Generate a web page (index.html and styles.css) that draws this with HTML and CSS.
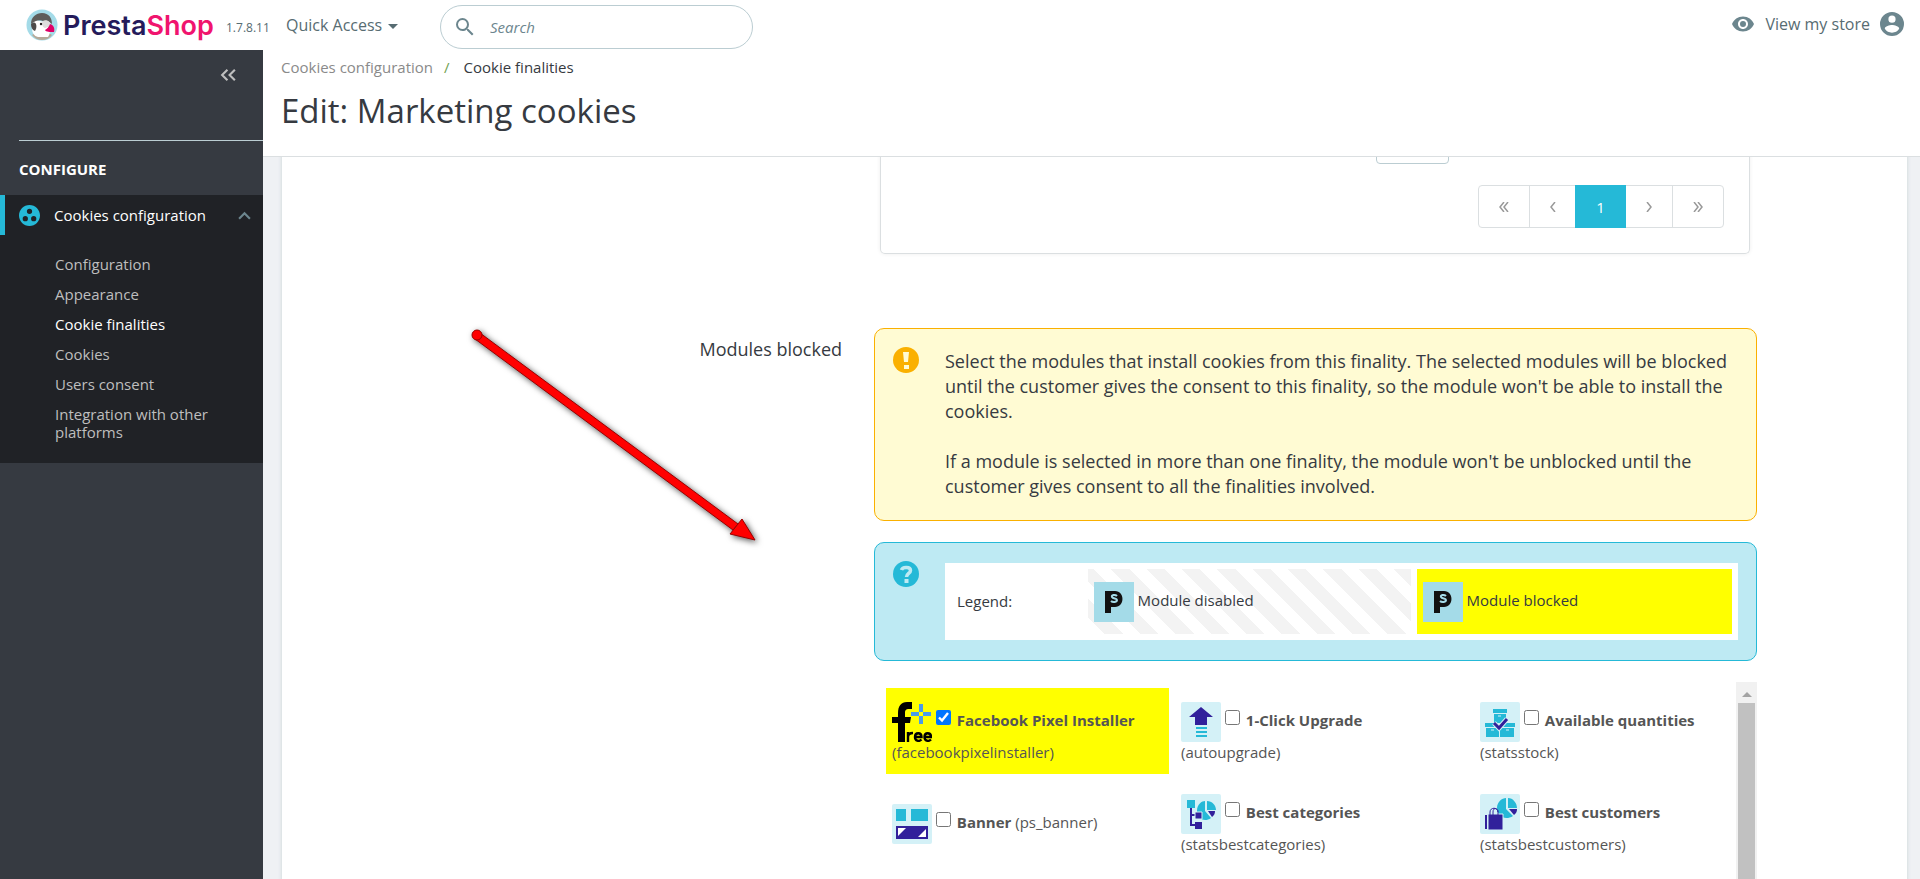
FILE: index.html
```html
<!DOCTYPE html>
<html lang="en">
<head>
    <meta charset="UTF-8">
    <meta name="viewport" content="width=device-width, initial-scale=1.0">
    <title>Edit: Marketing cookies</title>
    <link rel="stylesheet" href="styles.css">
</head>
<body>
    <header class="header">
        <a class="logo" href="#">
            <svg class="logo-icon" viewBox="0 0 32 32" aria-hidden="true">
                <circle cx="16" cy="16" r="15.500" fill="#a4dbe8"/>
                <path d="M6 26c3-3 17-3 20 0-2 3-6 5-10 5s-8-2-10-5z" fill="#b5a999"/>
                <path d="M6 19c0 5 2 8 6 9h10c2-3 3-8 1-14L9 11c-2 2-3 5-3 8z" fill="#fff"/>
                <path d="M5 15C5 8 10 4 16 4c7 0 10 5 10 11-3-3-6-4-9-3-4-2-8 0-12 3z" fill="#5f5d5b"/>
                <path d="M5 15c2-2 4-2 5 0 1 3 0 5-1 7-3-1-4-4-4-7z" fill="#4d4b4a"/>
                <path d="M17 12c4-2 8 1 8 5l-6 2c-3-1-4-5-2-7z" fill="#ddd"/>
                <circle cx="15" cy="15" r="1.200" fill="#222"/>
                <path d="M24 15c4 1 5 5 4 8-4 0-8 0-9-2 2-1 4-3 5-6z" fill="#df0067"/>
            </svg>
            <span class="logo-text">Presta<span class="logo-shop">Shop</span></span>
        </a>
        <span class="version">1.7.8.11</span>
        <button class="quick-access" type="button">Quick Access <span class="caret"></span></button>
        <form class="search">
            <svg class="search-icon" viewBox="3 3 18 18" aria-hidden="true"><path d="M15.5 14h-.79l-.28-.27A6.47 6.47 0 0 0 16 9.500 6.500 6.500 0 1 0 9.500 16c1.610 0 3.090-.59 4.230-1.570l.27.28v.79l5 4.990L20.490 19l-4.990-5zm-6 0C7.010 14 5 11.990 5 9.500S7.010 5 9.500 5 14 7.010 14 9.500 11.990 14 9.500 14z"/></svg>
            <input type="text" placeholder="Search" aria-label="Search">
        </form>
        <a class="view-store" href="#">
            <svg viewBox="0 0 24 24" aria-hidden="true"><path d="M12 4.500C7 4.500 2.730 7.610 1 12c1.730 4.390 6 7.500 11 7.500s9.270-3.110 11-7.500c-1.730-4.390-6-7.500-11-7.500zM12 17c-2.760 0-5-2.240-5-5s2.240-5 5-5 5 2.240 5 5-2.240 5-5 5zm0-8a3 3 0 1 0 0 6 3 3 0 0 0 0-6z"/></svg>
            View my store
        </a>
        <button class="account" type="button" aria-label="Account">
            <svg viewBox="2 2 20 20" aria-hidden="true"><path d="M12 2a10 10 0 1 0 0 20 10 10 0 0 0 0-20zm0 3a3 3 0 1 1 0 6 3 3 0 0 1 0-6zm0 14.200a7.200 7.200 0 0 1-6-3.220c.03-1.990 4-3.080 6-3.080s5.970 1.090 6 3.080a7.200 7.200 0 0 1-6 3.220z"/></svg>
        </button>
    </header>

    <div class="layout">
        <nav class="sidebar">
            <button class="collapse" type="button" aria-label="Collapse menu">
                <svg viewBox="0 0 16 12" aria-hidden="true"><path d="M7 1L2 6l5 5M14 1L9 6l5 5"/></svg>
            </button>
            <h2 class="menu-title">CONFIGURE</h2>
            <div class="menu-group">
                <a class="menu-item" href="#">
                    <svg class="menu-icon" viewBox="2 2 20 20" aria-hidden="true"><path d="M12 2C6.480 2 2 6.480 2 12s4.480 10 10 10 10-4.480 10-10S17.520 2 12 2zM8 17.500a2.500 2.500 0 1 1 0-5 2.500 2.500 0 0 1 0 5zM9.500 8a2.500 2.500 0 1 1 5 0 2.500 2.500 0 0 1-5 0zm6.500 9.500a2.500 2.500 0 1 1 0-5 2.500 2.500 0 0 1 0 5z"/></svg>
                    <span>Cookies configuration</span>
                    <svg class="chevron" viewBox="0 0 12 8" aria-hidden="true"><path d="M1 7l5-5 5 5"/></svg>
                </a>
                <ul class="submenu">
                    <li><a href="#">Configuration</a></li>
                    <li><a href="#">Appearance</a></li>
                    <li><a class="active" href="#">Cookie finalities</a></li>
                    <li><a href="#">Cookies</a></li>
                    <li><a href="#">Users consent</a></li>
                    <li><a href="#">Integration with other platforms</a></li>
                </ul>
            </div>
        </nav>

        <main class="main">
            <div class="toolbar">
                <div class="breadcrumb"><a href="#">Cookies configuration</a><span class="slash">/</span><span>Cookie finalities</span></div>
                <h1>Edit: Marketing cookies</h1>
            </div>

            <div class="content">
                <div class="panel">
                    <div class="list-card">
                        <select class="page-size" aria-label="Items per page"></select>
                        <div class="pagination">
                            <button type="button" aria-label="First"><svg viewBox="0 0 10 10"><path d="M5 0L1 5l4 5M9 0L5 5l4 5"/></svg></button>
                            <button type="button" class="previous" aria-label="Previous"><svg viewBox="0 0 10 10"><path d="M7 0L3 5l4 5"/></svg></button>
                            <button type="button" class="current">1</button>
                            <button type="button" aria-label="Next"><svg viewBox="0 0 10 10"><path d="M3 0l4 5-4 5"/></svg></button>
                            <button type="button" aria-label="Last"><svg viewBox="0 0 10 10"><path d="M1 0l4 5-4 5M5 0l4 5-4 5"/></svg></button>
                        </div>
                    </div>

                    <div class="field-label">Modules blocked</div>
                    <div class="field">
                        <div class="alert alert-warning">
                            <svg class="alert-icon" viewBox="0 0 26 26" aria-hidden="true"><circle cx="13" cy="13" r="13" fill="#fab000"/><path d="M10 5h6l-1 10h-4zM11 18h5v4h-5z" fill="#fffbd3"/></svg>
                            <div>
                                <p>Select the modules that install cookies from this finality. The selected modules will be blocked until the customer gives the consent to this finality, so the module won't be able to install the cookies.</p>
                                <p>If a module is selected in more than one finality, the module won't be unblocked until the customer gives consent to all the finalities involved.</p>
                            </div>
                        </div>

                        <div class="alert alert-info">
                            <svg class="alert-icon" viewBox="0 0 26 26" aria-hidden="true"><circle cx="13" cy="13" r="13" fill="#25b9d7"/><path d="M8.500 9c1-3.500 9-3.500 9 .5 0 3-4 3-4 6.500" fill="none" stroke="#beeaf3" stroke-width="3.500"/><path d="M11.500 18h4v4h-4z" fill="#beeaf3"/></svg>
                            <table class="legend">
                                <tr>
                                    <td class="legend-title">Legend:</td>
                                    <td class="legend-disabled"><svg class="module-icon" viewBox="0 0 40 40"><use href="#ps"/></svg> Module disabled</td>
                                    <td class="blocked"><svg class="module-icon" viewBox="0 0 40 40"><use href="#ps"/></svg> Module blocked</td>
                                </tr>
                            </table>
                        </div>

                        <div class="modules">
                            <div class="module-grid">
                                <label class="module blocked">
                                    <svg class="module-icon" viewBox="0 0 40 40" aria-hidden="true">
                                        <path d="M6 40V21H0v-6h6v-4C6 4 9 0 15 0h5v7h-3c-3 0-4 1-4 4v4h6l-1 6h-5v19z"/>
                                        <path d="M27 2h4v8h-4zM27 14h4v8h-4zM19 10h8v4h-8zM31 10h8v4h-8z" fill="#4a9be8"/>
                                        <path d="M16 40V30M16 35c0-3 2-4 5-4M23 35h6.500c0-5-6.500-5-6.500 0 0 4 4 5 6.500 2.500M32.500 35H39c0-5-6.500-5-6.500 0 0 4 4 5 6.500 2.500" fill="none" stroke="#000" stroke-width="2.400"/>
                                    </svg>
                                    <input type="checkbox" checked>
                                    <strong>Facebook Pixel Installer</strong> <span class="tech">(facebookpixelinstaller)</span>
                                </label>
                                <label class="module">
                                    <svg class="module-icon" viewBox="0 0 40 40" aria-hidden="true">
                                        <rect width="40" height="40" rx="2" fill="#d4f1f7"/>
                                        <path d="M20 5l12 10h-6v8H14v-8H8z" fill="#31209b"/>
                                        <path d="M15 25h11v2H15zM15 29h11v2H15zM15 33h11v2H15z" fill="#25b9d7"/>
                                    </svg>
                                    <input type="checkbox">
                                    <strong>1-Click Upgrade</strong> <span class="tech">(autoupgrade)</span>
                                </label>
                                <label class="module">
                                    <svg class="module-icon" viewBox="0 0 40 40" aria-hidden="true">
                                        <rect width="40" height="40" rx="2" fill="#d4f1f7"/>
                                        <path d="M13 7h14v4H13zM14 12h12v9H14zM5 21h13v4H5zM21 21h14v4H21zM6 26h13v9H6zM20 26h14v9H20z" fill="#25b9d7"/>
                                        <path d="M18 14h3M11 28h3M26 28h3" stroke="#d4f1f7"/>
                                        <path d="M14 21l5 5 8-9" fill="none" stroke="#d4f1f7" stroke-width="5"/>
                                        <path d="M14 21l5 5 8-9" fill="none" stroke="#31209b" stroke-width="3"/>
                                    </svg>
                                    <input type="checkbox">
                                    <strong>Available quantities</strong> <span class="tech">(statsstock)</span>
                                </label>
                                <label class="module">
                                    <svg class="module-icon" viewBox="0 0 40 40" aria-hidden="true">
                                        <rect width="40" height="40" rx="2" fill="#d4f1f7"/>
                                        <path d="M4 5h10v12H4zM19 5h17v12H19z" fill="#25b9d7"/>
                                        <path d="M4 22h32v13H4z" fill="#31209b"/>
                                        <path d="M6 24h8l-8 8zM34 33h-8l8-8z" fill="#fff"/>
                                    </svg>
                                    <input type="checkbox">
                                    <strong>Banner</strong> <span class="tech">(ps_banner)</span>
                                </label>
                                <label class="module">
                                    <svg class="module-icon" viewBox="0 0 40 40" aria-hidden="true">
                                        <rect width="40" height="40" rx="2" fill="#d4f1f7"/>
                                        <path d="M10 13v18h6M10 21h6" fill="none" stroke="#31209b" stroke-width="2"/>
                                        <path d="M6 6h8v8H6z" fill="#25b9d7"/>
                                        <path d="M14 28h7v7h-7zM27 17h7c0 3-1 4-3 6z" fill="#31209b"/>
                                        <path d="M24 7v10l6 7c-7 5-14 0-14-7s5-10 8-10zM26 7c5 0 9 4 9 9h-9z" fill="#25b9d7"/>
                                        <path d="M14 18h7v7h-7z" fill="#31209b" stroke="#d4f1f7"/>
                                    </svg>
                                    <input type="checkbox">
                                    <strong>Best categories</strong> <span class="tech">(statsbestcategories)</span>
                                </label>
                                <label class="module">
                                    <svg class="module-icon" viewBox="0 0 40 40" aria-hidden="true">
                                        <rect width="40" height="40" rx="2" fill="#d4f1f7"/>
                                        <path d="M26 4v11l7 7c-8 5-16 0-16-8 0-6 5-10 9-10zM28 4c5 0 9 5 9 10h-9z" fill="#25b9d7"/>
                                        <path d="M29 15h8c0 3-1 4-3 6z" fill="#31209b"/>
                                        <path d="M8 20h15v16H8z" fill="#31209b" stroke="#d4f1f7"/>
                                        <path d="M5 21h2v14H5z" fill="#31209b"/>
                                        <path d="M10 21v-3c0-5 8-5 8 0v3M13 21v-3c0-5 5-4 5 0" fill="none" stroke="#31209b"/>
                                    </svg>
                                    <input type="checkbox">
                                    <strong>Best customers</strong> <span class="tech">(statsbestcustomers)</span>
                                </label>
                            </div>
                            <div class="scrollbar" aria-hidden="true"><span class="scroll-up"></span><span class="scroll-thumb"></span></div>
                        </div>
                    </div>
                </div>

                <svg class="arrow" viewBox="0 0 300 230" aria-hidden="true">
                    <g fill="#f00" stroke="#900">
                        <path d="M17 11L275 202l-5 6L12 17z"/>
                        <path d="M279 197L292 218 267 212z"/>
                        <circle cx="14" cy="13" r="5"/>
                    </g>
                </svg>
            </div>
        </main>
    </div>

    <svg class="defs" aria-hidden="true">
        <symbol id="ps" viewBox="0 0 40 40">
            <rect width="40" height="40" fill="#a4dbe8"/>
            <path d="M11 9h10c10 0 10 16 0 16h-4v6h-6z" fill="#111"/>
            <path d="M23 14c-2-2-6-1-5 1s5 1 5 3-4 3-6 1" fill="none" stroke="#a4dbe8" stroke-width="2"/>
        </symbol>
    </svg>
</body>
</html>
```
FILE: styles.css
```css
* {
    box-sizing: border-box;
}
body {
    margin: 0;
    height: 100vh;
    display: flex;
    flex-direction: column;
    overflow: hidden;
    font-family: "Open Sans", sans-serif;
    font-size: 15px;
    color: #363a41;
    background-color: #eff1f4;
}
a {
    color: inherit;
    text-decoration: none;
}
button {
    font: inherit;
    color: inherit;
    background: none;
    border: none;
    padding: 0;
    cursor: pointer;
}
.defs {
    display: none;
}

/* Header */
.header {
    height: 50px;
    flex: none;
    display: flex;
    align-items: center;
    padding: 0 16px 0 26px;
    background-color: #fff;
    color: #576c72;
    font-size: 16px;
    position: relative;
    z-index: 3;
}
.header svg {
    fill: #6c868e;
}
.logo {
    display: flex;
    align-items: center;
    gap: 5px;
    width: 200px;
}
.logo-icon {
    width: 32px;
    height: 32px;
}
.logo-text {
    font-family: Inter, sans-serif;
    font-size: 27px;
    font-weight: 600;
    color: #251b5b;
}
.logo-shop {
    color: #f0146e;
}
.version {
    width: 60px;
    font-size: 12px;
    padding-top: 4px;
}
.quick-access {
    width: 154px;
    text-align: left;
}
.caret {
    display: inline-block;
    margin-left: 2px;
    vertical-align: 2px;
    border: 5px solid transparent;
    border-top-color: #576c72;
    border-bottom: none;
}
.search {
    display: flex;
    align-items: center;
    gap: 16px;
    width: 313px;
    height: 44px;
    margin-top: 4px;
    padding: 0 15px;
    border: 1px solid #bbcdd2;
    border-radius: 22px;
}
.search-icon {
    width: 18px;
    height: 18px;
}
.search input {
    flex: 1;
    min-width: 0;
    padding: 0;
    border: none;
    outline: none;
    font: italic 15px "Open Sans", sans-serif;
}
.search input::placeholder {
    color: #6c868e;
}
.view-store {
    display: flex;
    align-items: center;
    gap: 10px;
    margin: 0 0 2px auto;
}
.view-store svg,
.account svg {
    display: block;
    width: 24px;
    height: 24px;
}
.account {
    margin: 0 0 2px 10px;
}

.layout {
    flex: 1;
    min-height: 0;
    display: flex;
}

/* Sidebar */
.sidebar {
    width: 263px;
    flex: none;
    background-color: #363a41;
    color: #fff;
}
.collapse {
    display: block;
    margin: 18px 26px 58px auto;
}
.collapse svg {
    display: block;
    width: 17px;
    height: 14px;
    fill: none;
    stroke: #bebebe;
    stroke-width: 2;
}
.menu-title {
    margin: 0 0 0 19px;
    padding: 18px 0 16px;
    border-top: 1px solid #bbcdd2;
    font-size: 15px;
    line-height: 20px;
    font-weight: 700;
}
.menu-group {
    background-color: #202226;
    padding-bottom: 22px;
}
.menu-item {
    display: flex;
    align-items: center;
    height: 40px;
    padding: 0 12px 0 14px;
    border-left: 5px solid #25b9d7;
}
.menu-icon {
    width: 21px;
    height: 21px;
    margin-right: 14px;
    fill: #25b9d7;
}
.chevron {
    width: 13px;
    height: 9px;
    margin-left: auto;
    fill: none;
    stroke: #6c868e;
    stroke-width: 2;
}
.submenu {
    list-style: none;
    margin: 0;
    padding: 20px 40px 0 55px;
    line-height: 18px;
    color: #bebebe;
}
.submenu a {
    display: block;
    padding: 0 0 12px;
}
.submenu li:last-child a {
    padding-bottom: 0;
}
.submenu .active {
    color: #fff;
}

/* Page head */
.main {
    flex: 1;
    min-width: 0;
    display: flex;
    flex-direction: column;
}
.toolbar {
    height: 107px;
    flex: none;
    padding: 6px 18px;
    background-color: #fff;
    border-bottom: 1px solid #dbdfe1;
    position: relative;
    z-index: 2;
}
.breadcrumb {
    line-height: 22px;
}
.breadcrumb a {
    color: #8a8a8a;
}
.slash {
    margin: 0 14px 0 11px;
    color: #72a250;
}
h1 {
    margin: 10px 0 0;
    font-size: 33px;
    line-height: 46px;
    font-weight: 400;
}

/* Form panel */
.content {
    flex: 1;
    min-height: 0;
    position: relative;
    overflow: hidden;
    padding: 0 13px 0 19px;
}
.panel {
    display: grid;
    grid-template-columns: 560fr 883fr 118fr;
    column-gap: 32px;
    margin-top: -28px;
    background-color: #fff;
    box-shadow: 0 0 4px #c9d3d6;
}
.list-card {
    grid-column: 2;
    display: flex;
    flex-direction: column;
    height: 125px;
    margin: 0 7px 74px 6px;
    padding-right: 25px;
    border: 1px solid #dbdfe1;
    border-top: none;
    border-radius: 5px;
    box-shadow: 0 0 4px #eee;
}
.page-size {
    align-self: flex-end;
    flex: none;
    appearance: none;
    width: 73px;
    height: 35px;
    margin-right: 275px;
    border: 1px solid #bbcdd2;
    border-radius: 4px;
    background-color: #fff;
}
.pagination {
    display: flex;
    align-self: flex-end;
    flex: none;
    height: 43px;
    margin-top: 21px;
    border: 1px solid #dbdfe1;
    border-radius: 4px;
}
.pagination button {
    display: flex;
    align-items: center;
    justify-content: center;
    width: 46px;
}
.pagination button:first-child {
    width: 51px;
    border-right: 1px solid #dbdfe1;
}
.pagination button:last-child {
    width: 51px;
    border-left: 1px solid #dbdfe1;
}
.pagination .previous {
    width: 45px;
}
.pagination .current {
    width: 51px;
    margin: -1px 0;
    background-color: #25b9d7;
    color: #fff;
}
.pagination svg {
    width: 10px;
    height: 10px;
    fill: none;
    stroke: #999;
    stroke-width: 1.5;
}
.field-label {
    grid-column: 1;
    padding-top: 9px;
    text-align: right;
    font-size: 18px;
    line-height: 25px;
}
.alert {
    display: flex;
    align-items: flex-start;
    gap: 26px;
    margin-bottom: 21px;
    padding: 18px 18px 20px;
    border-radius: 10px;
    font-size: 18px;
    line-height: 25px;
}
.alert-icon {
    flex: none;
    width: 26px;
    height: 26px;
}
.alert p {
    margin: 2px 0 25px;
}
.alert p:last-child {
    margin-bottom: 1px;
}
.alert-warning {
    border: 1px solid #fab000;
    background-color: #fffbd3;
}
.alert-info {
    border: 1px solid #25b9d7;
    background-color: #beeaf3;
}
.legend {
    flex: 1;
    table-layout: fixed;
    border-collapse: separate;
    border-spacing: 6px;
    margin-top: 2px;
    background-color: #fff;
    font-size: 15px;
}
.legend td {
    height: 65px;
    padding: 0 6px;
    width: 41%;
}
.legend .legend-title {
    width: 17%;
}
.legend .legend-disabled {
    width: 42%;
    background: repeating-linear-gradient(45deg, #fff 0 12px, #f3f3f3 12px 25px);
}
.blocked {
    background-color: #ff0;
}
.module-icon {
    width: 40px;
    height: 40px;
    vertical-align: middle;
}
.modules {
    display: flex;
    height: 400px;
    overflow: hidden;
}
.module-grid {
    flex: 1;
    display: grid;
    grid-template-columns: 283fr 293fr 256fr;
    grid-auto-rows: 86px;
    gap: 6px;
    padding: 6px 6px 6px 12px;
}
.module {
    align-content: center;
    padding: 2px 6px 0;
    line-height: 21px;
    color: #555;
}
.module input {
    width: 15px;
    height: 15px;
    margin: 0 2px 0 0;
    vertical-align: 1px;
}
.tech {
    white-space: nowrap;
}
.scrollbar {
    width: 21px;
    display: flex;
    flex-direction: column;
    align-items: center;
    background-color: #f1f1f1;
}
.scroll-up {
    margin: 10px 0 6px;
    border: 5px solid transparent;
    border-top: none;
    border-bottom-color: #a3a3a3;
}
.scroll-thumb {
    width: 17px;
    flex: 1;
    background-color: #c1c1c1;
}

/* Pointer drawn over the form */
.arrow {
    position: absolute;
    left: 200px;
    top: 165px;
    width: 300px;
    height: 230px;
    filter: drop-shadow(2px 2px 3px #555);
    pointer-events: none;
}
```
